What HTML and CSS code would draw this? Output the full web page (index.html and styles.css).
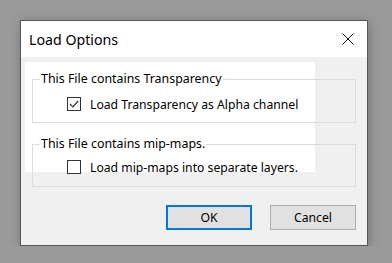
FILE: index.html
```html
<!DOCTYPE html>
<html lang="en">
<head>
  <meta charset="UTF-8">
  <title>Load Options</title>
  <link rel="stylesheet" href="styles.css">
</head>
<body>

  <div class="dialog">
    <div class="title-bar">
      <span class="title">Load Options</span>
      <button class="close-btn" aria-label="Close">
        <svg width="12" height="12" viewBox="0 0 12 12">
          <path d="M0.5 0.5 L11.5 11.5 M11.5 0.5 L0.5 11.5" stroke="#111" stroke-width="1" fill="none"/>
        </svg>
      </button>
    </div>

    <div class="dialog-body">
      <div class="glare"></div>

      <fieldset class="group group-alpha">
        <legend>This File contains Transparency</legend>
        <label class="check-row">
          <span class="checkbox">
            <svg width="12" height="12" viewBox="0 0 12 12">
              <path d="M2 6 L4.8 8.8 L10.2 3" stroke="#333" stroke-width="1.2" fill="none"/>
            </svg>
          </span>
          Load Transparency as Alpha channel
        </label>
      </fieldset>

      <fieldset class="group group-mips">
        <legend>This File contains mip-maps.</legend>
        <label class="check-row">
          <span class="checkbox"></span>
          Load mip-maps into separate layers.
        </label>
      </fieldset>

      <div class="buttons">
        <button class="btn btn-default">OK</button>
        <button class="btn">Cancel</button>
      </div>
    </div>
  </div>

</body>
</html>
```

FILE: styles.css
```css
body {
  margin: 0;
  padding: 20px 0 0 20px;
  background-color: #9a9a9a;
  font-family: "Noto Sans", "Open Sans", sans-serif;
  font-size: 12px;
  color: #000;
}
.dialog {
  width: 346px;
  border: 1px solid #555;
  box-shadow: 1px 2px 10px rgba(0, 0, 0, 0.25);
  background-color: #f0f0f0;
}
.title-bar {
  height: 36px;
  background-color: #fff;
  display: flex;
  align-items: center;
  justify-content: space-between;
  padding: 0 13px 0 8px;
}
.title {
  font-size: 14.2px;
}
.close-btn {
  border: none;
  background: none;
  padding: 0;
  width: 12px;
  height: 12px;
  display: flex;
}
.dialog-body {
  position: relative;
  padding: 14px 11px 15px 11px;
}
.glare {
  position: absolute;
  left: 4px;
  top: 5px;
  width: 290px;
  height: 110px;
  background-color: #fff;
}
.group {
  position: relative;
  margin: 0;
  border: 1px solid #dcdcdc;
  padding: 9px 0 10px 7px;
}
.group legend {
  padding: 0 1px;
  line-height: 16px;
  font-size: 12.4px;
}
.group-mips {
  margin-top: 13px;
  padding: 7px 0 11px 7px;
}
.check-row {
  display: flex;
  align-items: center;
  gap: 9px;
  height: 16px;
  margin-left: 27px;
  font-size: 12.2px;
}
.checkbox {
  width: 12px;
  height: 12px;
  border: 1px solid #333;
  background-color: #fff;
  display: flex;
}
.buttons {
  display: flex;
  justify-content: flex-end;
  gap: 18px;
  margin-top: 18px;
}
.btn {
  width: 86px;
  height: 25px;
  background-color: #e1e1e1;
  border: 1px solid #adadad;
  font-family: inherit;
  font-size: 12.2px;
  color: #000;
  padding: 0;
}
.btn-default {
  border: 2px solid #0078d7;
}
```
